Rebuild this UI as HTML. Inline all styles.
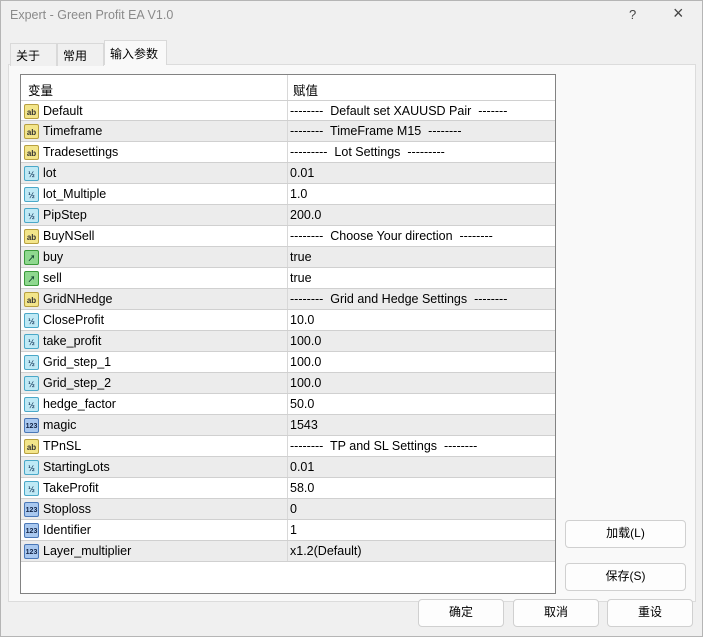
<!DOCTYPE html><html><head><meta charset="utf-8"><style>
*{margin:0;padding:0;box-sizing:border-box}
body{width:703px;height:637px;background:#f0f0f0;font-family:"Liberation Sans","Noto Sans CJK SC",sans-serif;font-size:12.5px;color:#000;position:relative;overflow:hidden}
.frame{position:absolute;left:0;top:0;width:703px;height:637px;border:1px solid #b5b5b5;pointer-events:none}
.a{position:absolute}
.title{left:10px;top:8px;font-size:12.5px;color:#8a8a8a}
.tab{top:42px;height:23px;border:1px solid #d9d9d9;border-bottom:none;background:#f0f0f0;padding:3px 5px;font-size:12px}
.panel{left:8px;top:64px;width:688px;height:538px;background:#f9f9f9;border:1px solid #dcdcdc}
.tbl{left:20px;top:74px;width:536px;height:520px;background:#fff;border:1px solid #828282}
.row{position:absolute;left:0;width:534px;height:21px;border-bottom:1px solid #d0d0d0}
.row.g{background:#ececec}
.row span{position:absolute;top:3px;white-space:pre}
.n{left:22px}.v{left:269px}
.sep{position:absolute;left:266px;top:0;width:1px;height:100%;background:#d8d8d8}
.ic{position:absolute;left:3px;top:3px;width:15px;height:15px;border-radius:2px;font-size:8px;line-height:15px;text-align:center;font-weight:bold}
.ab{background:#f3e58a;border:1px solid #b8a040;color:#333}
.hf{background:#bfe9f5;border:1px solid #4aa8c8;color:#246}
.bo{background:#8fd88f;border:1px solid #3a9a3a;color:#143}
.nu{background:#a9c8ef;border:1px solid #4a78b8;color:#124;font-size:7px}
.btn{background:#fdfdfd;border:1px solid #d0d0d0;border-radius:4px;text-align:center;line-height:25px;font-size:12px}
</style></head><body>
<div class="a title">Expert - Green Profit EA V1.0</div>
<div class="a" style="left:629px;top:7px;font-size:13px;color:#444">?</div>
<div class="a" style="left:673px;top:3px;font-size:18px;color:#444">×</div>
<div class="panel a"></div>
<div class="a tab" style="left:10px;width:47px;top:43px">关于</div>
<div class="a tab" style="left:57px;width:47px;top:43px">常用</div>
<div class="a tab" style="left:104px;width:63px;top:40px;height:25px;background:#f9f9f9;padding-top:4px">输入参数</div>
<div class="tbl a">
<div class="sep" style="height:25px"></div>
<div class="a" style="left:7px;top:5px">变量</div><div class="a" style="left:272px;top:5px">赋值</div>
<div id="rows"></div>
</div>
<div class="a btn" style="left:565px;top:520px;width:121px;height:28px">加载(L)</div>
<div class="a btn" style="left:565px;top:563px;width:121px;height:28px">保存(S)</div>
<div class="a btn" style="left:418px;top:599px;width:86px;height:28px">确定</div>
<div class="a btn" style="left:513px;top:599px;width:86px;height:28px">取消</div>
<div class="a btn" style="left:607px;top:599px;width:86px;height:28px">重设</div>
<div class="frame"></div>
<script>
var d=[["ab","Default","--------  Default set XAUUSD Pair  -------"],["ab","Timeframe","--------  TimeFrame M15  --------"],["ab","Tradesettings","---------  Lot Settings  ---------"],["hf","lot","0.01"],["hf","lot_Multiple","1.0"],["hf","PipStep","200.0"],["ab","BuyNSell","--------  Choose Your direction  --------"],["bo","buy","true"],["bo","sell","true"],["ab","GridNHedge","--------  Grid and Hedge Settings  --------"],["hf","CloseProfit","10.0"],["hf","take_profit","100.0"],["hf","Grid_step_1","100.0"],["hf","Grid_step_2","100.0"],["hf","hedge_factor","50.0"],["nu","magic","1543"],["ab","TPnSL","--------  TP and SL Settings  --------"],["hf","StartingLots","0.01"],["hf","TakeProfit","58.0"],["nu","Stoploss","0"],["nu","Identifier","1"],["nu","Layer_multiplier","x1.2(Default)"]];
var t={ab:"ab",hf:"½",bo:"↗",nu:"123"},h="";
d.forEach(function(r,i){h+='<div class="row'+(i%2?' g':'')+'" style="top:'+(25+i*21)+'px;'+(i==0?'border-top:1px solid #d0d0d0':'')+'"><div class="sep"></div><div class="ic '+r[0]+'">'+t[r[0]]+'</div><span class="n">'+r[1]+'</span><span class="v">'+r[2]+'</span></div>';});
document.getElementById("rows").innerHTML=h;
</script>
</body></html>
